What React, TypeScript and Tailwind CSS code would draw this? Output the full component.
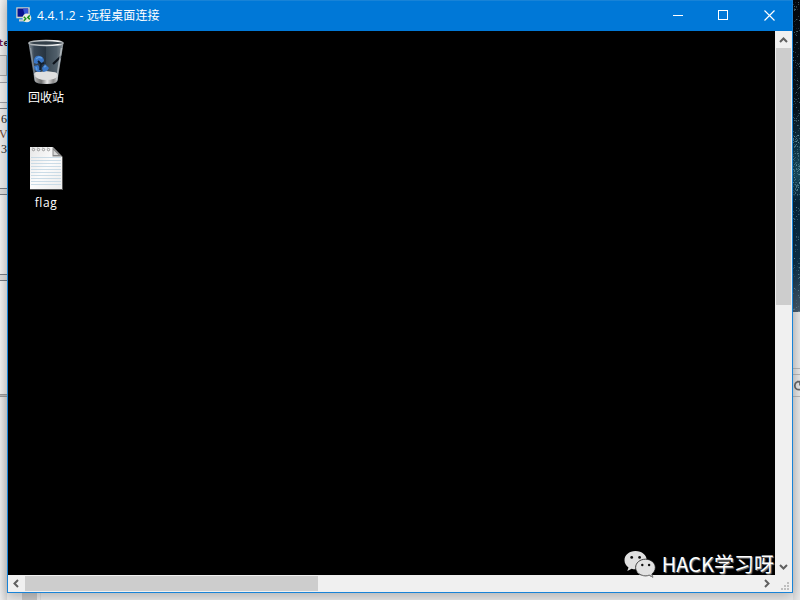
import React from 'react';

const STARS = Array.from({ length: 330 }, (_, i) => {
  const a = Math.abs(Math.sin(i * 12.9898 + 4.1) * 43758.5453) % 1;
  const b = Math.abs(Math.sin(i * 78.233 + 1.7) * 12543.123) % 1;
  const c = Math.abs(Math.sin(i * 37.719 + 2.3) * 9871.77) % 1;
  const dense = i % 3 === 0;
  return { x: Math.floor(a * 7), y: Math.floor(dense ? 135 + b * 60 : b * 312), o: 0.12 + c * 0.4 };
});

function Wallpaper() {
  return (
    <svg width="7" height="312" viewBox="0 0 7 312" shapeRendering="crispEdges" className="block shrink-0">
      <defs>
        <linearGradient id="sky" x1="0" y1="0" x2="0" y2="1">
          <stop offset="0" stopColor="#05080d" />
          <stop offset=".35" stopColor="#07131d" />
          <stop offset=".46" stopColor="#0d3346" />
          <stop offset=".56" stopColor="#174a5e" />
          <stop offset=".65" stopColor="#06243a" />
          <stop offset=".85" stopColor="#0b3049" />
          <stop offset="1" stopColor="#46596a" />
        </linearGradient>
      </defs>
      <rect width="7" height="312" fill="url(#sky)" />
      {STARS.map((s, i) => (
        <rect key={i} x={s.x} y={s.y} width="1" height="1" fill="#8fc4d0" opacity={s.o} />
      ))}
    </svg>
  );
}

function LeftBackdrop() {
  return (
    <div className="flex h-[600px] w-[7px] flex-col bg-gradient-to-r from-[#f0f0f0] to-[#dedede]">
      <div className="h-[36px] shrink-0" />
      <div className="flex h-[19px] shrink-0 font-['DejaVu_Sans_Mono',monospace] text-[9px] leading-[14px] font-bold">
        <span className="-ml-[2px] text-[#71104f]">t</span>
        <span className="text-[#2c1230]">e</span>
      </div>
      <div className="h-[21px] w-[7px] shrink-0 border border-l-0 border-[#a7a7a7] bg-[#e1e1e1]" />
      <div className="h-[6px] shrink-0" />
      <div className="h-[21px] shrink-0 border-y border-[#a0a0a6] bg-[#eeeeee]" />
      <div className="h-[6px] shrink-0 border-b border-[#777d85]" />
      <div className="h-[79px] shrink-0 bg-[#ececec] pt-[3px] font-['Liberation_Serif',serif] text-[12px] leading-[15px]">
        <div className="pl-px text-[#222222]">6</div>
        <div className="-ml-px text-[#704834]">V</div>
        <div className="pl-px text-[#222222]">3</div>
      </div>
      <div className="h-[7px] shrink-0 border-y border-[#777d85] bg-[#dddddd]" />
      <div className="h-[79px] shrink-0 bg-gradient-to-r from-[#f3f3f3] to-[#e6e6e6]" />
      <div className="h-[7px] shrink-0 border-y border-[#777d85] bg-[#dddddd]" />
      <div className="h-[113px] shrink-0 bg-gradient-to-r from-[#f3f3f3] to-[#e6e6e6]" />
      <div className="h-[3px] shrink-0 border-y border-[#999] bg-[#bbb]" />
      <div className="grow bg-gradient-to-r from-[#ededed] to-[#d6d6d6]" />
    </div>
  );
}

function RightBackdrop() {
  return (
    <div className="flex h-[600px] w-[7px] flex-col overflow-hidden bg-gradient-to-r from-[#dcdcdc] to-[#e9e9e9]">
      <Wallpaper />
      <div className="h-[56px] shrink-0" />
      <div className="h-[7px] shrink-0 border-y border-[#b6b6b6]" />
      <div className="h-[22px] shrink-0 border-b border-[#b6b6b6] pt-[5px]">
        <svg width="7" height="12" viewBox="0 0 7 12" fill="none" stroke="#666" strokeWidth="1.7">
          <path d="M7 2.2C4 .8 1.8 3 1.8 5.8S4 10 7 9.6M4 1.5h3v4" />
        </svg>
      </div>
    </div>
  );
}

function RdpIcon() {
  return (
    <svg width="16" height="16" viewBox="0 0 16 16" className="block">
      <rect x=".3" y=".3" width="13.4" height="11" fill="#d9d5c9" />
      <rect x="1.5" y="1.5" width="10.7" height="8.2" fill="#07118f" />
      <path d="M7 1.5h5.2v8.2H9z" fill="#3455d6" />
      <path d="M3 12.3h6v2.2H3z" fill="#c9cbd2" />
      <circle cx="10.9" cy="10.9" r="4.4" fill="#e7ebdf" />
      <path d="M7.8 9.7l2 2-2 2M13.8 8.4l-2 2 2 2" fill="none" stroke="#19931e" strokeWidth="1.5" />
    </svg>
  );
}

function TitleBar() {
  return (
    <div className="flex h-[31px] shrink-0 border-t border-[#1883d7] bg-[#0078d7] pl-[8px]">
      <div className="pt-[6px]"><RdpIcon /></div>
      <div className="ml-[5px] grow whitespace-pre pt-[7px] font-['Open_Sans','Noto_Sans_CJK_SC',sans-serif] text-[12px] leading-[16px] text-white">
        <span className="tracking-[0.3px]">4.4.1.2 - </span>
        <span className="tracking-[0.1px]">远程桌面连接</span>
      </div>
      <div className="flex h-[28px] text-white">
        <div className="flex w-[46px] items-center justify-center">
          <svg width="10" height="10" shapeRendering="crispEdges"><path d="M0 5.5h10" stroke="currentColor" /></svg>
        </div>
        <div className="flex w-[44px] items-center justify-center">
          <svg width="10" height="10" shapeRendering="crispEdges"><path d="M.5.5h9v9h-9z" fill="none" stroke="currentColor" /></svg>
        </div>
        <div className="flex w-[47px] items-center justify-center pl-px">
          <svg width="11" height="11"><path d="M.5.5l10 10M10.5.5l-10 10" stroke="currentColor" strokeWidth="1.15" /></svg>
        </div>
      </div>
    </div>
  );
}

function RecycleBin() {
  return (
    <svg width="38" height="46" viewBox="0 0 38 46" className="block">
      <defs>
        <linearGradient id="glass" x1="0" y1="0" x2="1" y2="0">
          <stop offset="0" stopColor="#8d979f" />
          <stop offset=".16" stopColor="#3a4856" />
          <stop offset=".5" stopColor="#26333f" />
          <stop offset=".8" stopColor="#4b5863" />
          <stop offset="1" stopColor="#98a0a5" />
        </linearGradient>
        <linearGradient id="base" x1="0" y1="0" x2="1" y2="0">
          <stop offset="0" stopColor="#b5b5b5" />
          <stop offset=".3" stopColor="#6f6f6f" />
          <stop offset=".55" stopColor="#e8e8e8" />
          <stop offset=".8" stopColor="#8a8a8a" />
          <stop offset="1" stopColor="#c4c4c4" />
        </linearGradient>
        <linearGradient id="rim" x1="0" y1="0" x2="1" y2="0">
          <stop offset="0" stopColor="#a8aeb2" />
          <stop offset=".5" stopColor="#d0d4d6" />
          <stop offset=".85" stopColor="#ffffff" />
          <stop offset="1" stopColor="#9ba0a3" />
        </linearGradient>
      </defs>
      <path d="M1.5 4L7.5 42Q8.5 45 19 45T30.5 42L36.5 4z" fill="url(#glass)" />
      <path d="M19 7h15l-4 27H19z" fill="#5a6975" opacity=".35" />
      <path d="M7 37h24l-.8 5Q29 45 19 45T7.8 42z" fill="url(#base)" />
      <path d="M6.8 36Q7 32 13 33l6-1 7 1q5 0 5 4-3 4-12 4T6.8 36z" fill="#e0e0e0" />
      <path d="M34.5 17L26 25" stroke="#0d131b" strokeWidth="2.2" />
      <path d="M7 21q1-5 6-4 4 1 4 5l-2 2-3-1-2 2-3-1zM7 27l4-1 3 5-1 2q-6 0-6-6zM15 29l3-4 4 4-2 3-4 1z" fill="#3976c6" />
      <path d="M11 22l3 3 3-1M14 25l-1 6" stroke="#0f1d2e" strokeWidth="1.8" fill="none" />
      <path d="M9 20l3-2 3 1M17 28l2-1M9 28l1 3" stroke="#5c9be0" strokeWidth="1.4" fill="none" />
      <ellipse cx="19" cy="4" rx="17" ry="2.5" fill="#34404a" stroke="url(#rim)" strokeWidth="1.7" />
      <path d="M3.5 9L8.5 41" stroke="#b0bac1" opacity=".5" strokeWidth="1.3" />
      <path d="M34.5 9L29.5 41" stroke="#cbd0d3" opacity=".65" strokeWidth="1.6" />
    </svg>
  );
}

function TextFile() {
  return (
    <svg width="34" height="44" viewBox="0 0 34 44" className="block">
      <defs>
        <linearGradient id="paper" x1="0" y1="0" x2="1" y2="1">
          <stop offset="0" stopColor="#e6e6e6" />
          <stop offset=".5" stopColor="#fcfcfc" />
          <stop offset="1" stopColor="#ebebeb" />
        </linearGradient>
      </defs>
      <path d="M0 0h24l9 10v33H0z" fill="#555" />
      <path d="M0 0h23l9 10v32H0z" fill="url(#paper)" />
      {[10, 13, 16, 19, 22, 25, 28, 31, 34, 37].map((y) => (
        <path key={y} d={`M1 ${y}.5h30`} stroke="#c5d8e4" strokeWidth=".9" />
      ))}
      {[3.5, 8.5, 13.5, 18.5].map((x) => (
        <g key={x}>
          <circle cx={x} cy="2.6" r="1.2" fill="none" stroke="#888" strokeWidth=".8" />
          <path d={`M${x - 1} 0v3`} stroke="#bbb" strokeWidth=".6" />
        </g>
      ))}
      <path d="M23 0h11v10z" fill="#000" />
      <path d="M22.5 0l9.5 9.5h-9.5z" fill="#858585" />
      <path d="M23.5 3l5 5h-5z" fill="#d8d8d8" />
    </svg>
  );
}

function WeChat() {
  return (
    <svg width="32" height="28" viewBox="0 0 32 28" className="relative z-10 block">
      <path d="M11.5 1C5.2 1 .5 5 .5 10.2c0 3 1.5 5.5 4 7.2L3.3 21l4.3-2.2c1.3.4 2.6.5 4 .5 6.3 0 11.1-4 11.1-9.1S17.9 1 11.5 1z" fill="#e0e0e0" />
      <path d="M21.5 9.2c-5.6 0-9.9 3.7-9.9 8.3s4.3 8.3 9.9 8.3c1.4 0 2.6-.2 3.7-.6l3.6 2-.9-3.2c2.1-1.6 3.4-3.8 3.4-6.5 0-4.6-4.2-8.3-9.8-8.3z" fill="#e2e2e2" stroke="#181818" strokeWidth=".8" />
      <path d="M13 22c2 2.6 5 3.8 8.5 3.8 1.4 0 2.6-.2 3.7-.6l3.6 2-.7-2.8" fill="none" stroke="#999" strokeWidth=".7" />
      <g fill="#111">
        <circle cx="7.7" cy="7.4" r="1.4" />
        <circle cx="15.6" cy="7.4" r="1.4" />
        <circle cx="18.3" cy="15" r="1.2" />
        <circle cx="25.1" cy="15" r="1.2" />
      </g>
    </svg>
  );
}

function Desktop() {
  return (
    <div className="flex min-w-0 grow flex-col justify-between bg-black text-[12px] text-white">
      <div className="flex w-[76px] flex-col items-center pt-[8px]">
        <RecycleBin />
        <div className="mt-[4px] h-[15px] font-['Noto_Sans_CJK_SC',sans-serif] leading-[15px]">回收站</div>
        <div className="mt-[43px] pl-[2px]"><TextFile /></div>
        <div className="mt-[4px] h-[15px] font-['Open_Sans',sans-serif] text-[12px] leading-[15px] tracking-[.6px]">flag</div>
      </div>
      <div className="mb-[-4px] flex h-[30px] items-center justify-end pr-px">
        <WeChat />
        <span className="ml-[6px] whitespace-nowrap font-['Noto_Sans_CJK_SC',sans-serif] text-[20px] leading-[28px] text-white [text-shadow:1px_1px_1px_#888]">HACK学习呀</span>
      </div>
    </div>
  );
}

function Arrow({ direction }: { direction: 'up' | 'down' | 'left' | 'right' }) {
  const paths = {
    up: 'M5 11l3.5-3.5L12 11',
    down: 'M5 7l3.5 3.5L12 7',
    left: 'M10 5L6.5 8.5 10 12',
    right: 'M7 5l3.5 3.5L7 12',
  };
  return (
    <svg width="17" height="17" viewBox="0 0 17 17" className="block shrink-0">
      <path d={paths[direction]} fill="none" stroke="#606060" strokeWidth="2" />
    </svg>
  );
}

function RemoteWindow() {
  return (
    <div className="absolute top-0 left-[7px] flex h-[593px] w-[786px] flex-col border-x border-b border-[#1883d7] bg-[#f0f0f0] shadow-[0_3px_12px_rgba(0,0,0,0.25)]">
      <TitleBar />
      <div className="flex h-[544px] shrink-0">
        <Desktop />
        <div className="flex w-[17px] shrink-0 flex-col bg-[#f0f0f0]">
          <Arrow direction="up" />
          <div className="ml-px h-[257px] w-[15px] bg-[#cdcdcd]" />
          <div className="grow" />
          <Arrow direction="down" />
        </div>
      </div>
      <div className="flex h-[17px] shrink-0 bg-[#f0f0f0]">
        <Arrow direction="left" />
        <div className="mt-px h-[15px] w-[293px] bg-[#cdcdcd]" />
        <div className="grow" />
        <Arrow direction="right" />
        <svg width="17" height="17" viewBox="0 0 17 17" fill="#bfbfbf" shapeRendering="crispEdges">
          <path d="M12 7h2v2h-2zM9 10h2v2H9zM12 10h2v2h-2zM6 13h2v2H6zM9 13h2v2H9zM12 13h2v2h-2z" />
        </svg>
      </div>
    </div>
  );
}

export default function App() {
  return (
    <div className="relative flex h-[600px] w-[800px] justify-between overflow-hidden bg-[#e9e9e9]">
      <LeftBackdrop />
      <div className="flex grow items-end">
        <div className="ml-[15px] h-[8px] w-[15px] bg-[#c8c8c8]" />
        <div className="ml-[3px] h-[8px] w-px bg-[#ddd]" />
      </div>
      <RightBackdrop />
      <RemoteWindow />
    </div>
  );
}
